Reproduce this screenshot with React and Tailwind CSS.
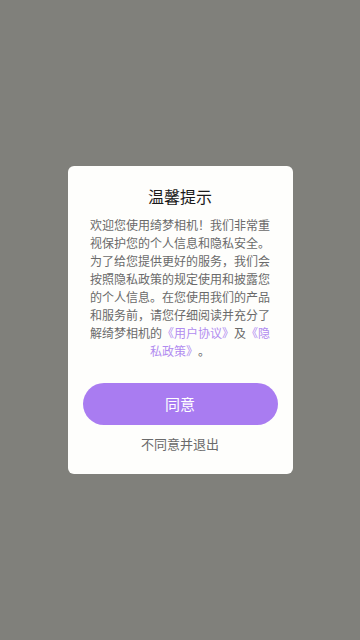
import React from 'react';

const App = () => {
    return (
        <div
            className="w-[360px] h-[640px] bg-[#80807b] flex items-center justify-center"
            style={{ fontFamily: '"Noto Sans CJK SC", "Noto Sans", sans-serif' }}
        >
            <div className="w-[225px] bg-[#fefefc] rounded-[6px] px-[21px] pt-[19px] pb-[21px] flex flex-col items-center [text-spacing-trim:space-all]">
                <h2 className="text-[16px] leading-[22px] text-[#1a1a1a] font-normal">温馨提示</h2>
                <p className="mt-[9px] w-[182px] text-[12px] leading-[18px] text-[#6a6a6a] text-center">
                    欢迎您使用绮梦相机！我们非常重视保护您的个人信息和隐私安全。为了给您提供更好的服务，我们会按照隐私政策的规定使用和披露您的个人信息。在您使用我们的产品和服务前，请您仔细阅读并充分了解绮梦相机的<span className="text-[#b18cf0]">《用户协议》</span>及<span className="text-[#b18cf0]">《隐私政策》</span>。
                </p>
                <button className="mt-[23px] w-[195px] h-[42px] rounded-full bg-[#a97cf1] text-white text-[15px]">
                    同意
                </button>
                <button className="mt-[10px] text-[13px] leading-[18px] text-[#6a6a6a]">
                    不同意并退出
                </button>
            </div>
        </div>
    );
};

export default App;
